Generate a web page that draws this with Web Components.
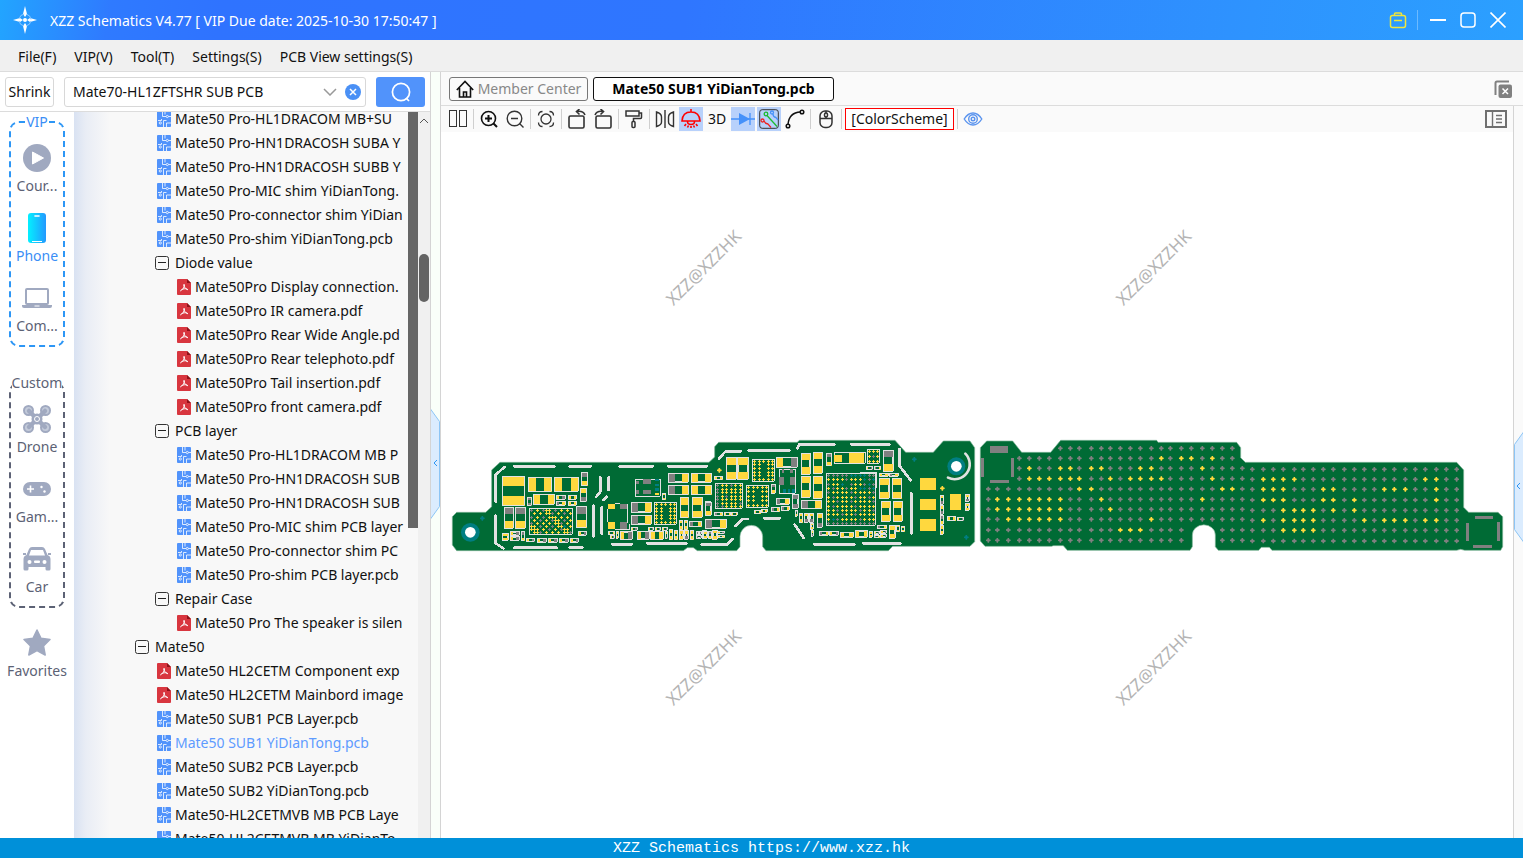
<!DOCTYPE html>
<html lang="en">
<head>
<meta charset="utf-8">
<title>XZZ Schematics V4.77</title>
<style>
html, body { margin: 0; height: 100%; }
body { font: 14px/20px "Noto Sans", "Open Sans", sans-serif; color: #111; overflow: hidden; }
</style>
</head>
<body>
<xzz-app></xzz-app>
<script>
const ICONS = {
  logo: ['0 0 24 30', '<g fill="#fff"><path d="M12 1l2 8-2 3-2-3zM12 29l2-8-2-3-2 3zM0 15l7-2 3 2-3 2zM24 15l-7-2-3 2 3 2z"/><circle cx="12" cy="15" r="2"/></g><g fill="none" stroke="#8fcaff"><circle cx="12" cy="15" r="6" stroke-dasharray="7 2.4" stroke-dashoffset="-1"/></g>'],
  bag: ['0 0 18 18', '<g fill="none" stroke="#f0e63c" stroke-width="1.5"><rect x="1.500" y="4.500" width="15" height="12" rx="2"/><path d="M5.500 4.500v-1.500a1 1 0 0 1 1-1h5a1 1 0 0 1 1 1v1.500M5 9.500h8"/></g>'],
  min: ['0 0 16 16', '<path d="M0 8h16" stroke="#fff" stroke-width="2"/>'],
  max: ['0 0 16 16', '<rect x="1" y="1" width="14" height="14" rx="3" fill="none" stroke="#fff" stroke-width="1.500"/>'],
  close: ['0 0 16 16', '<path d="M.500.500l15 15M15.500.500l-15 15" stroke="#fff" stroke-width="1.600"/>'],
  chevron: ['0 0 14 8', '<path d="M1 1l6 6 6-6" fill="none" stroke="#999" stroke-width="1.500"/>'],
  clear: ['0 0 16 16', '<circle cx="8" cy="8" r="8" fill="#4a90f5"/><path d="M5 5l6 6M11 5l-6 6" stroke="#fff" stroke-width="1.500"/>'],
  search: ['0 0 20 20', '<g fill="none" stroke="#fff" stroke-width="1.700"><circle cx="10" cy="10" r="8.600"/><path d="M15 16l3 3"/></g>'],
  pcb: ['0 0 14 16', '<rect width="14" height="16" rx="1" fill="#5193fb"/><g fill="none" stroke="#fff" stroke-width=".8"><path d="M5.500 0v5.500h3.500M8 0v3.500M1 9.500h3.500v-1.500M14 5.500h-2.500M6.500 16V9.500h3M9.500 16v-4h4.500"/><circle cx="10.300" cy="5.500" r="1.100"/><circle cx="3.300" cy="12" r="1.100"/></g>'],
  pdf: ['0 0 14 16', '<path d="M1 0h9l4 4v11a1 1 0 0 1-1 1H1a1 1 0 0 1-1-1V1a1 1 0 0 1 1-1z" fill="#d8363f"/><path d="M10 0l4 4h-4z" fill="#8e1219"/><path d="M3.200 12c2-.8 4.600-4 4.300-6.200-.3-1-1.300-.4-.8.8.7 2 2.800 4 4.300 4.200M4.500 10.600c1.500-.8 3.800-1.100 5.700-.6" fill="none" stroke="#fff"/>'],
  minus: ['0 0 14 14', '<rect x=".500" y=".500" width="13" height="13" rx="2" fill="#f8f8f8" stroke="#333"/><path d="M3 6.500h8" stroke="#222"/>'],
  play: ['0 0 28 28', '<circle cx="14" cy="14" r="14" fill="#a0a9c0"/><path d="M9.500 8v12l11-6z" fill="#fff" stroke="#fff" stroke-linejoin="round"/>'],
  phone: ['0 0 28 30', '<defs><linearGradient id="p"><stop stop-color="#04f0ff"/><stop offset="1" stop-color="#2399ff"/></linearGradient></defs><rect x="5" width="18" height="30" rx="3" fill="url(#p)"/><path d="M12 3h4" stroke="#fff" stroke-width="1.600" stroke-linecap="round"/><path d="M9 28.500h10" stroke="#fff"/>'],
  laptop: ['0 0 30 20', '<rect x="4" y="1" width="22" height="15" rx="1" fill="none" stroke="#a0a9c0" stroke-width="2"/><path d="M0 17h30v1q0 2-2 2H2q-2 0-2-2z" fill="#a0a9c0"/><path d="M12.500 18h5" stroke="#fff"/>'],
  drone: ['0 0 28 28', '<g fill="#c4cbda" stroke="#a0a9c0" stroke-width="2"><circle cx="5.500" cy="5.500" r="4.500"/><circle cx="22.500" cy="5.500" r="4.500"/><circle cx="5.500" cy="22.500" r="4.500"/><circle cx="22.500" cy="22.500" r="4.500"/></g><path d="M6 6l16 16M22 6L6 22" stroke="#a0a9c0" stroke-width="4.500" stroke-linecap="round"/><circle cx="14" cy="14" r="5.500" fill="#a0a9c0"/><circle cx="14" cy="14" r="2.500" fill="#a0a9c0" stroke="#fff"/>'],
  game: ['0 0 28 14', '<rect width="28" height="14" rx="7" fill="#a0a9c0"/><path d="M7.500 3.500v7M4 7h7" stroke="#fff" stroke-width="1.600"/><circle cx="18.500" cy="5" r="1.200" fill="#fff"/><circle cx="21.500" cy="9.500" r="1.200" fill="#fff"/>'],
  car: ['0 0 28 24', '<path d="M6 2q1-2 3-2h10q2 0 3 2l2.500 6q3 1 3 4v10q0 1.500-1.500 1.500h-2q-1.500 0-1.500-1.500v-2H5.500v2q0 1.500-1.500 1.500H2q-1.500 0-1.500-1.500V12q0-3 3-4zM8 3L6 8.500h16L20 3z" fill="#a0a9c0"/><path d="M0 7h3M25 7h3" stroke="#a0a9c0" stroke-width="2"/><g fill="#fff"><circle cx="6.500" cy="15" r="2"/><circle cx="21.500" cy="15" r="2"/><rect x="11" y="13.500" width="6" height="2.500" rx="1"/></g>'],
  star: ['0 0 28 28', '<path d="M14 1l4 8.300 9 1.200-6.500 6.400 1.700 9.100-8.200-4.400L5.800 26l1.700-9.100L1 10.500l9-1.200z" fill="#a0a9c0" stroke="#a0a9c0" stroke-width="1.500" stroke-linejoin="round"/>'],
  home: ['0 0 18 18', '<g fill="none" stroke="#111" stroke-width="1.600"><path d="M.800 10L9 1.500l8.200 8.500M3.500 8v9h11V8M7.500 17v-5h3v5"/></g>'],
  closeAll: ['0 0 18 18', '<path d="M1.500 15V3q0-1.500 1.500-1.500h12" fill="none" stroke="#808080" stroke-width="2"/><rect x="4.500" y="4.500" width="13.500" height="13.500" rx="2" fill="#808080"/><path d="M8.500 8.500l5.500 5.500M14 8.500L8.500 14" stroke="#fff" stroke-width="1.500"/>'],
  panel: ['0 0 22 18', '<g fill="none" stroke="#707070"><rect x="1" y="1" width="20" height="16" stroke-width="2"/><path d="M7.500 1v16M11 5.500h6M11 9h6M11 12.500h6" stroke-width="1.400"/></g>'],
  split: ['0 0 20 18', '<g fill="none" stroke="#333"><rect x="1.500" y=".500" width="7" height="16"/><rect x="11.500" y=".500" width="7" height="16"/></g>'],
  zoomIn: ['0 0 20 20', '<g fill="none" stroke="#111" stroke-width="1.600"><circle cx="9.500" cy="9.500" r="7"/><path d="M14.500 14.500l3.500 3.500M6 9.500h7M9.500 6v7" stroke-width="2"/></g>'],
  zoomOut: ['0 0 20 20', '<g fill="none" stroke="#333" stroke-width="1.400"><circle cx="9.500" cy="9.500" r="7.300"/><path d="M14.500 14.500l4 4M6 9.500h7"/></g>'],
  fit: ['0 0 18 18', '<g fill="none" stroke="#333" stroke-width="1.300"><circle cx="9" cy="9" r="5"/><path d="M1.500 5.500q0-4 4-4M12.500 1.500q4 0 4 4M16.500 12.500q0 4-4 4M5.500 16.500q-4 0-4-4"/></g>'],
  rotL: ['0 0 20 20', '<g fill="none" stroke="#333" stroke-width="1.600"><rect x="2" y="7" width="15" height="12" rx="1.500"/><path d="M10 2.500q6-1 8 3.500M12.500 0L9.500 2.500l3 3"/></g>'],
  rotR: ['0 0 20 20', '<g fill="none" stroke="#333" stroke-width="1.600"><rect x="3" y="7" width="15" height="12" rx="1.500"/><path d="M2 6q2-4.500 8-3.500M7.500 0l3 2.500-3 3"/></g>'],
  roller: ['0 0 20 20', '<g fill="none" stroke="#333" stroke-width="1.500"><rect x="2" y="2" width="13" height="5"/><path d="M15 4h2.500v4.500q0 1-1 1H9.500v3"/><rect x="8" y="12.500" width="3" height="6" rx="1"/></g>'],
  mirror: ['0 0 20 20', '<g fill="none" stroke="#333" stroke-width="1.400"><path d="M1.500 3q5 1.500 5 5v5q0 3-5 4.500zM18.500 3q-5 1.500-5 5v5q0 3 5 4.500zM10 1v18"/></g>'],
  lamp: ['0 0 20 20', '<g fill="none" stroke="#f00" stroke-width="1.600"><path d="M10 0v3M1 12q.5-9 9-9t9 9zM6.500 12.500q0 3 3.500 3t3.500-3M10 17v2M5 15l-1.500 2M15 15l1.500 2M7.500 16.500l-1 2M12.500 16.500l1 2"/></g>'],
  diode: ['0 0 24 20', '<path d="M0 10h24M19 4v12" stroke="#4591fa" stroke-width="1.300"/><path d="M8 4l11 6-11 6z" fill="#4591fa"/>'],
  net: ['0 0 20 20', '<rect x=".700" y=".700" width="18.600" height="18.600" rx="2.500" fill="none" stroke="#333"/><g fill="none" stroke-width="1.300"><g stroke="#1cbb2e"><circle cx="7" cy="5" r="1.800"/><path d="M8 6.500L18 17.500"/></g><g stroke="#e22"><circle cx="3.500" cy="11.500" r="1.500"/><path d="M5 12q1 2.500 4 3l3 3.500"/></g><g stroke="#4591fa"><circle cx="13" cy="3.500" r="1.500"/><path d="M14 5q0 3 3 3.500l2 2.500"/></g></g>'],
  curve: ['0 0 20 20', '<g fill="none" stroke="#111" stroke-width="1.500"><path d="M3 15.500q1-12 12.500-12.500"/><circle cx="3" cy="17" r="1.800"/><circle cx="17" cy="3" r="1.800"/></g>'],
  mouse: ['0 0 20 20', '<g fill="none" stroke="#333" stroke-width="1.500"><rect x="4" y="2" width="12" height="16.500" rx="5"/><path d="M4 9.500h12M10 2v2M10 7.500v2"/><rect x="8.500" y="4" width="3" height="4" rx="1.500"/></g>'],
  eye: ['0 0 20 20', '<g fill="none" stroke="#5b94ee" stroke-width="1.400"><path d="M1.200 10Q5 4 10 4t8.800 6Q15 16 10 16T1.200 10z"/><circle cx="10" cy="10" r="4.300"/><circle cx="10" cy="10" r="1.800"/></g>'],
  up: ['0 0 10 6', '<path d="M1 5l4-4 4 4" fill="none" stroke="#555"/>']
};

function define(name, markup, setup) {
  customElements.define(name, class extends HTMLElement {
    constructor() { super(); this.attachShadow({ mode: 'open' }); }
    connectedCallback() {
      if (this.shadowRoot.childNodes.length) return;
      const t = document.createElement('template');
      t.innerHTML = typeof markup === 'function' ? markup(this) : markup;
      this.shadowRoot.append(t.content.cloneNode(true));
      if (setup) setup(this);
    }
  });
}

define('ui-icon', el => {
  const [box, body] = ICONS[el.getAttribute('name')];
  const [, , w, h] = box.split(' ');
  return `<style>:host{display:block;flex:none}svg{display:block}</style><svg width="${w}" height="${h}" viewBox="${box}" aria-hidden="true">${body}</svg>`;
});

define('title-bar', `
<style>
:host{display:flex;align-items:center;height:40px;padding:0 16px 0 13px;color:#fff;background:linear-gradient(100deg,#22a5ff 0,#2f7aff 110px,#2f73ff 220px,#2f76ff 45%,#2e93fe 82%,#2ba0ff 100%)}
h1{flex:1;margin:0 0 0 13px;padding-top:2px;font-size:14px;font-weight:400}
button{display:flex;align-items:center;justify-content:center;width:30px;height:30px;padding:0;border:0;background:none}
i{width:1px;height:20px;background:#6cbaff;margin:0 5px 0 4px}
.w{display:flex;align-items:center;margin-right:-6px}
</style>
<ui-icon name="logo"></ui-icon>
<h1>XZZ Schematics V4.77 [ VIP Due date: 2025-10-30 17:50:47 ]</h1>
<div class="w"><button aria-label="Account"><ui-icon name="bag"></ui-icon></button><i></i>
<button aria-label="Minimize"><ui-icon name="min"></ui-icon></button>
<button aria-label="Maximize"><ui-icon name="max"></ui-icon></button>
<button aria-label="Close"><ui-icon name="close"></ui-icon></button></div>`);

define('menu-bar', `
<style>
:host{display:flex;gap:18px;align-items:center;height:31px;padding:0 18px;background:#f0f0f0;border-bottom:1px solid #dcdcdc}
::slotted(button){border:0;padding:2px 0 0;background:none;color:#111;font:14px/20px "Noto Sans",sans-serif}
</style><slot></slot>`);

define('search-bar', `
<style>
:host{display:flex;align-items:center;height:39px;padding:0 5px;background:#fff;border-bottom:1px solid #dcdcdc}
button{padding:0;background:none;border:0;color:#111;font:14px/20px "Noto Sans",sans-serif;display:flex;align-items:center;justify-content:center}
.shrink{box-sizing:border-box;width:49px;height:30px;border:1px solid #d8d8d8;border-radius:3px;margin-right:10px}
.box{flex:1;display:flex;align-items:center;gap:8px;height:28px;min-width:0;border:1px solid #d8d8d8;border-radius:3px;padding:0 4px 0 8px}
input{flex:1;min-width:0;border:0;outline:0;padding:0;background:none;color:#111;font:14px/20px "Noto Sans",sans-serif}
.go{width:49px;height:30px;margin-left:10px;border-radius:3px;background:#5193fb}
</style>
<button class="shrink">Shrink</button>
<div class="box"><input aria-label="Search files" value="Mate70-HL1ZFTSHR SUB PCB"><button aria-label="History"><ui-icon name="chevron"></ui-icon></button><button aria-label="Clear"><ui-icon name="clear"></ui-icon></button></div>
<button class="go" aria-label="Search"><ui-icon name="search"></ui-icon></button>`);

define('rail-item', el => `
<style>
:host{display:block}
button{display:flex;flex-direction:column;align-items:center;box-sizing:border-box;width:100%;height:70px;padding:5px 0 0;border:0;background:none;color:#5c6275;font:14px/20px "Noto Sans",sans-serif}
:host([active]) button{color:#3a8ef6}
.i{height:36px;display:flex;align-items:center;justify-content:center}
</style><button><span class="i"><ui-icon name="${el.getAttribute('icon')}"></ui-icon></span><slot></slot></button>`);

define('nav-rail', `
<style>
:host{display:block;width:74px;flex:none;background:#fff;overflow:hidden}
fieldset{min-width:0;margin:0 9px 26px;padding:3px 0 0;border:2px dashed #2d96f5;border-radius:10px;color:#3a8ef6}
fieldset.c{border-color:#5c6275;color:#5c6275;margin-bottom:12px}
legend{padding:0;margin:0 auto;height:20px;font-size:14px;line-height:20px}
.b{display:block;height:210px}
</style>
<fieldset><legend>VIP</legend><div class="b"><rail-item icon="play">Cour...</rail-item><rail-item icon="phone" active>Phone</rail-item><rail-item icon="laptop">Com...</rail-item></div></fieldset>
<fieldset class="c"><legend>Custom</legend><div class="b"><rail-item icon="drone">Drone</rail-item><rail-item icon="game">Gam...</rail-item><rail-item icon="car">Car</rail-item></div></fieldset>
<rail-item icon="star">Favorites</rail-item>`);

define('tree-row', el => `
<style>
:host{display:flex;align-items:center;height:24px;white-space:nowrap;gap:4px;padding-left:calc(var(--level,0)*20px + 63px)}
:host([kind=minus]){padding-left:calc(var(--level,0)*20px + 61px);gap:6px}
a{color:inherit;text-decoration:none}
:host([selected]){color:#5e9bff}
</style><ui-icon name="${el.getAttribute('kind')}"></ui-icon><a href="#"><slot></slot></a>`,
el => el.style.setProperty('--level', el.getAttribute('level')));

const FILES = `1 pcb Mate50 Pro-HL1DRACOM MB+SU
1 pcb Mate50 Pro-HN1DRACOSH SUBA Y
1 pcb Mate50 Pro-HN1DRACOSH SUBB Y
1 pcb Mate50 Pro-MIC shim YiDianTong.
1 pcb Mate50 Pro-connector shim YiDian
1 pcb Mate50 Pro-shim YiDianTong.pcb
1 minus Diode value
2 pdf Mate50Pro Display connection.
2 pdf Mate50Pro IR camera.pdf
2 pdf Mate50Pro Rear Wide Angle.pd
2 pdf Mate50Pro Rear telephoto.pdf
2 pdf Mate50Pro Tail insertion.pdf
2 pdf Mate50Pro front camera.pdf
1 minus PCB layer
2 pcb Mate50 Pro-HL1DRACOM MB P
2 pcb Mate50 Pro-HN1DRACOSH SUB
2 pcb Mate50 Pro-HN1DRACOSH SUB
2 pcb Mate50 Pro-MIC shim PCB layer
2 pcb Mate50 Pro-connector shim PC
2 pcb Mate50 Pro-shim PCB layer.pcb
1 minus Repair Case
2 pdf Mate50 Pro The speaker is silen
0 minus Mate50
1 pdf Mate50 HL2CETM Component exp
1 pdf Mate50 HL2CETM Mainbord image
1 pcb Mate50 SUB1 PCB Layer.pcb
1 pcb* Mate50 SUB1 YiDianTong.pcb
1 pcb Mate50 SUB2 PCB Layer.pcb
1 pcb Mate50 SUB2 YiDianTong.pcb
1 pcb Mate50-HL2CETMVB MB PCB Laye
1 pcb Mate50-HL2CETMVB MB YiDianTo`.split('\n').map(l => l.match(/^(\d) (\w+)(\*?) (.*)$/));

define('file-tree', () => `
<style>
:host{display:flex;flex:1;min-width:0;overflow:hidden;font-size:14px;background:linear-gradient(90deg,#d9e2f2 0,#e9edf5 12px,#f8f8f8 36px)}
.rows{flex:1;min-width:0;overflow:hidden}
.in{margin-top:-5px}
.h{width:10px;height:416px;margin-left:2px;background:#666}
.v{width:12px;background:#f0f0f0;display:flex;flex-direction:column;align-items:center}
.v ui-icon{margin:6px 0 0}
.v b{width:10px;height:48px;border-radius:5px;background:#636363;margin-top:130px}
</style>
<div class="rows"><div class="in">${FILES.map(f => `<tree-row level="${f[1]}" kind="${f[2]}"${f[3] ? ' selected' : ''}>${f[4]}</tree-row>`).join('')}</div></div>
<div class="h"></div><div class="v"><ui-icon name="up"></ui-icon><b></b></div>`);

define('side-handle', el => {
  const r = el.hasAttribute('right');
  return `<style>
:host{display:flex;align-items:center;width:9px;flex:none;background:${r ? '#fafafa' : '#f9fff9'};border-left:1px solid #d4d4d4;padding-top:${r ? 30 : 18}px}
:host(:not([right])){border-right:1px solid #d4d4d4}
button{padding:0;border:0;background:none;display:block}svg{display:block}
</style><button aria-label="Toggle panel"><svg width="9" height="110" viewBox="0 0 9 110"><path d="${r ? 'M9.500 0L.500 12.500v85L9.500 110' : 'M-.500 0L8.500 12.500v85L-.500 110'}" fill="#dbecfe" stroke="#8cc5f5"/><path d="M6 51L3 54l3 3" fill="none" stroke="#2d96f5"/></svg></button>`;
});

define('tab-strip', `
<style>
:host{display:flex;align-items:center;gap:5px;height:33px;padding:0 11px 0 8px;background:#fafafa;border-bottom:1px solid #dcdcdc}
button{display:flex;align-items:center;justify-content:center;gap:4px;box-sizing:border-box;height:24px;padding:0 5px;border:1px solid #777;border-radius:3px;background:#fafafa;color:#888;font:14px/20px "Noto Sans",sans-serif}
.on{width:241px;border-color:#111;color:#000;font-weight:700;background:#fff}
.m{width:139px}
.x{margin-left:auto;border:0;padding:0}
</style>
<button class="m"><ui-icon name="home"></ui-icon>Member Center</button>
<button class="on">Mate50 SUB1 YiDianTong.pcb</button>
<button class="x" aria-label="Close all"><ui-icon name="closeAll"></ui-icon></button>`);

const TOOLS = ['split', '|', 'zoomIn', 'zoomOut', '|', 'fit', '|', 'rotL', 'rotR', '|', 'roller', '|', 'mirror', 'lamp*', '3D', 'diode*', 'net*', 'curve', '|', 'mouse', '|', 'scheme', '|', 'eye'];
define('tool-bar', () => `
<style>
:host{display:flex;align-items:center;gap:2px;height:26px;padding:0 5px;background:#fafafa}
button{width:24px;height:24px;display:flex;align-items:center;justify-content:center;flex:none;padding:0;border:0;background:none;color:#111;font:14px/20px "Noto Sans",sans-serif}
.on{background:#b8d1fb}
i{width:1px;height:20px;margin:0 1px;background:#cfcfcf}
.scheme{box-sizing:border-box;width:109px;height:22px;border:1px solid #f00;background:#fff}
.p{margin-left:auto}
</style>${TOOLS.map(t => {
  if (t === '|') return '<i></i>';
  if (t === '3D') return '<button>3D</button>';
  if (t === 'scheme') return '<button class="scheme">[ColorScheme]</button>';
  const n = t.replace('*', '');
  return `<button aria-label="${n}"${n !== t ? ' class="on"' : ''}><ui-icon name="${n}"></ui-icon></button>`;
}).join('')}<button class="p" aria-label="Side panel"><ui-icon name="panel"></ui-icon></button>`);

/* Board art, in thirds of a pixel. Each part: x1 y1 x2 y2, then direction (h/v) and the colours of its two pads. */
const Y = '#ffd83e', G = '#808080', T = '#007e82', W = '#e2e2e2', B = '#006b35';
const COL = { y: Y, g: G, t: T };
const snap = v => Math.round(v / 3) * 3;
const parse = s => s.trim().split(/\s*;\s*/).map(p => p.split(/\s+/).map(v => isNaN(v) ? v : +v));
const rect = (x, y, x2, y2, c) => `<path fill="${c}" d="M${snap(x)} ${snap(y)}H${snap(x2)}V${snap(y2)}H${snap(x)}z"/>`;
const frame = (x, y, x2, y2) => `<path d="M${snap(x) + 1.5} ${snap(y) + 1.5}H${snap(x2) - 1.5}V${snap(y2) - 1.5}H${snap(x) + 1.5}z" fill="none" stroke="${W}" stroke-width="3"/>`;
const part = ([x, y, x2, y2, k]) => {
  const w = x2 - x, h = y2 - y, a = COL[k[1]], b = COL[k[2]];
  const pads = k[0] === 'h'
    ? rect(x, y, x + w * .32, y2, a) + rect(x2 - w * .32, y, x2, y2, b)
    : rect(x, y, x2, y + h * .34, a) + rect(x, y2 - h * .34, x2, y2, b);
  return frame(x, y, x2, y2) + (w > 30 || h > 30
    ? pads.replace(/<path/g, '<path') : pads.replace(/z"/g, 'z"')) + frame(x - 1, y - 1, x2 + 1, y2 + 1);
};
const dot = (x, y, c, r = 7) => `<path shape-rendering="auto" fill="${c}" d="M${x - 2} ${y - r}h4l1 4l4 1v4l-4 1l-1 4h-4l-1-4l-4-1v-4l4-1z"/>`;
const pin = (x, y, c) => `<path fill="${c}" d="M${x} ${y - 3}h3v3h3v3h-3v3h-3v-3h-3v-3h3z"/>`;
const bga = (x, y, x2, y2, nx, ny, color) => {
  let s = frame(x, y, x2, y2);
  for (let i = 0; i < nx; i++) for (let j = 0; j < ny; j++) {
    const c = color(i, j);
    if (c) s += pin(snap(x + 6 + i * (x2 - x - 15) / (nx - 1)), snap(y + 6 + j * (y2 - y - 15) / (ny - 1)), c);
  }
  return s;
};

const PA = parse(`172 124 240 212 vyy;249 126 320 170 hyy;328 126 400 170 hyy;265 178 328 209 hyy;408 112 428 152 vgy;406 160 425 200 vyg;246 186 260 212 vgg;334 181 361 194 hyg;370 181 394 194 hyy;334 199 361 211 hgy;370 199 394 211 hyy;177 217 206 280 vgy;211 217 242 280 vgy;394 214 425 278 vgy;400 289 425 301 hyg;172 294 190 317 vyy;195 290 223 301 hyg;195 305 223 317 hyg;228 290 240 317 vgy;244 310 270 320 hyg;277 310 304 322 hyg;310 310 337 322 hyg;343 310 370 322 hyg;376 310 400 322 hyg;652 175 663 194 vyy;669 114 732 142 hgy;738 114 800 142 hyy;669 151 732 179 hgy;738 151 800 179 hyy;706 188 732 249 vyy;741 188 772 249 vyy;781 200 798 242 vgg;558 202 620 232 hgy;558 240 620 268 hgy;702 255 713 284 vyy;718 255 729 284 vyy;732 259 770 276 hgy;489 288 510 299 hyy;495 301 510 312 hyg;513 290 521 310 vyy;526 290 562 314 hyg;577 288 613 313 hyg;617 288 655 314 hyy;660 290 668 312 vyg;673 283 684 314 vyy;687 286 698 314 vyy;704 286 715 314 vyy;719 286 730 314 vyg;735 286 746 314 vyy;755 290 770 298 hgg;755 301 770 310 hgg;773 285 785 312 vyy;558 277 577 287 hyg;609 277 625 287 hyg;630 277 648 287 hyg;652 277 667 287 hyg`);
const PB = parse(`42 123 68 135 hyy;78 68 110 133 vyy;113 68 145 133 vyy;230 66 294 97 hyg;213 148 227 175 vgy;228 190 268 208 hgy;277 178 295 220 vgg;303 54 331 118 vyy;340 52 368 115 vyy;303 124 331 187 vyy;340 124 368 190 vyy;303 196 366 222 hgy;378 54 396 93 vgy;550 46 580 109 vgy;498 93 518 104 hyg;523 93 543 104 hgy;537 114 565 124 hyy;567 114 595 124 hgy;538 129 568 192 vyy;577 129 606 192 vyy;543 198 571 260 vyy;580 198 607 260 vyy;720 180 731 208 vyg;720 212 731 238 vyg;720 242 731 268 vgy;720 272 731 298 vyy;797 177 808 200 vyg;797 204 808 227 vyy;741 244 767 257 hyy;771 247 791 257 hyg;42 232 68 243 hgy;72 232 92 242 hyy;95 232 112 242 hyy;16 252 80 280 hgy;9 288 22 312 vyy;24 288 35 312 vgy;38 285 52 314 vyy;53 288 74 297 hyg;53 300 74 309 hyy;162 226 182 236 hyy;184 223 202 233 hyy;213 216 240 230 hgy;243 214 268 227 hgy;286 226 294 244 vgy;298 234 309 263 vyy;313 234 325 263 vyg;329 234 342 263 vyg;352 236 368 277 vyg;332 265 342 283 vyy;333 287 342 304 vyg;357 289 386 301 hgy;388 289 416 301 hyg;420 291 460 307 hyy;466 287 504 307 hyy;508 290 518 307 vyy;522 289 540 298 hyg;522 300 540 309 hgy;532 270 560 282 hgy;542 286 560 295 hyg;542 298 560 307 hyg;568 270 586 310 vyy;588 271 600 290 vyy;603 275 615 290 vyy`);

const BOARD_A = () => `
<path fill="${B}" stroke="#7cb495" stroke-width="2" shape-rendering="auto" d="M35 347L22 330V245L35 232H122L140 215V105L165 82H792L809 66V35L821 22H1057L1063 16H1350L1382 52H1465L1495 18H1575L1589 38V320L1575 334H1343L1330 347H963L953 335V305A34 34 0 0 0 885 305V335L875 347H757L745 338H727L715 347z"/>
<g fill="none" stroke="${W}" stroke-width="8" stroke-linecap="round" stroke-linejoin="round">
<path d="M178 96L152 120V200M152 242V325L175 340M208 94H328M374 94H438M524 94H623M670 94H786M466 127V170L454 185M491 127V165M485 185L475 195M446 212V304M470 217V296M208 338H335M374 338H412M501 328H560M606 325H724M770 328H847L863 312"/></g>
<g shape-rendering="auto"><circle cx="76" cy="292" r="28" fill="${T}"/><circle cx="76" cy="292" r="16" fill="#fff"/></g>
${dot(112, 250, T)}
${PA.map(part).join('')}
${frame(571, 132, 648, 186)}
${rect(594, 132, 618, 147, G)}${rect(594, 165, 618, 178, G)}${rect(572, 137, 582, 147, G)}${rect(572, 165, 582, 178, G)}${rect(630, 132, 642, 139, T)}${rect(630, 146, 642, 153, T)}${rect(630, 160, 642, 167, T)}${rect(630, 174, 642, 180, Y)}
<path d="M510 207H525M489 223V262M510 285H553V268M549 207V265" fill="none" stroke="${W}" stroke-width="3"/>
${rect(489, 208, 510, 223, Y)}${rect(489, 262, 510, 282, Y)}${rect(525, 208, 546, 222, G)}${rect(525, 262, 546, 282, G)}
${bga(252, 220, 384, 300, 14, 8, (i, j) => (i + j) % 2 ? null : (i * 7 + j * 5) % 9 < 3 ? G : (i * 5 + j * 3) % 23 === 1 ? T : Y)}
${bga(252, 220, 384, 300, 14, 8, (i, j) => (i + j) % 2 && (i * 3 + j * 7) % 5 === 0 ? Y : null)}
${bga(627, 202, 696, 270, 5, 6, (i, j) => i === 2 && j > 0 && j < 5 ? null : Y)}`;

const BOARD_B = () => `
<g fill="none" stroke="${W}" stroke-width="8" stroke-linecap="round" stroke-linejoin="round">
<path d="M57 70L77 49H122M146 46H268M292 40L298 28H403M453 28H568M599 42V93L632 136M634 174V295M106 273L128 252H143M192 250H240M284 269L311 309M342 328H463M489 325H601"/>
<path d="M796 56A45 45 0 0 1 744 128" shape-rendering="auto"/></g>
<g shape-rendering="auto"><circle cx="769" cy="94" r="27" fill="${T}"/><circle cx="769" cy="94" r="16" fill="#fff"/></g>
${dot(643, 73, T)}${dot(799, 307, T)}${dot(58, 106, Y)}${dot(727, 160, Y)}
${PB.map(part).join('')}
${rect(660, 129, 708, 165, Y)}${rect(660, 192, 708, 225, Y)}${rect(660, 252, 708, 288, Y)}${rect(750, 177, 783, 225, Y)}
${frame(401, 51, 497, 87)}${rect(403, 60, 425, 82, Y)}${rect(447, 54, 491, 83, Y)}
${frame(236, 102, 288, 176)}
${rect(246, 103, 253, 113, G)}${rect(271, 103, 278, 113, G)}${rect(237, 126, 252, 150, G)}${rect(271, 126, 285, 150, G)}${rect(250, 162, 257, 175, T)}${rect(263, 162, 270, 175, T)}${rect(277, 162, 284, 175, T)}
${frame(15, 200, 35, 243)}${rect(18, 203, 33, 214, G)}${rect(18, 228, 33, 241, Y)}
${bga(156, 71, 225, 141, 5, 6, (i, j) => i === 2 && j > 0 && j < 5 ? null : Y)}
${bga(45, 145, 129, 223, 6, 7, (i, j) => i === 0 || (i * 3 + j) % 11 === 9 ? G : Y)}
${bga(138, 150, 207, 218, 5, 5, (i, j) => i === 2 && j > 0 && j < 4 ? null : Y)}
${bga(501, 43, 541, 87, 3, 3, (i, j) => i === 1 && j === 1 ? G : Y)}
${bga(379, 113, 529, 274, 11, 12, (i, j) => j === 0 ? (i > 4 && i < 9 ? T : G) : i > 7 && j < 4 ? ((i + j) % 2 ? T : G) : j === 11 || (i * 5 + j * 7) % 13 < 3 ? G : (i === 4 && j < 3) ? null : (i * 3 + j * 5) % 17 === 2 ? T : Y)}
<path d="M480 114H528V158" fill="none" stroke="${W}" stroke-width="5"/>`;

const CX = [55, 82, 115, 148, 178, 208, 238, 271, 301, 328, 364, 394, 421, 451, 481, 511, 544, 574, 601, 634, 664, 697, 727, 757, 787, 817];
const CY = [40, 70, 100, 131, 162, 193, 223, 253, 285, 316];
const CGOLD = [[], [574, 634, 664, 727], [178, 271, 301, 364, 394, 511, 544, 697], [178, 208, 238, 271, 301, 328, 421, 481, 511, 544, 574, 727], [328, 364, 757, 787], [82, 115, 148, 178, 208, 238, 271, 394, 697], [82, 115, 148, 178, 208, 238, 271, 421], [115, 148, 178, 208, 238, 271, 544], [451, 481, 511], []];
const DX = [67, 100, 130, 160, 193, 220, 250, 280, 310, 343, 373, 403, 433, 463, 493, 526, 556, 586, 619, 649, 680];
const DY = [148, 178, 208, 240, 271, 301, 331, 363];
const DGOLD = [[], [100, 130, 160, 193, 586, 619], [100, 130, 160, 280, 310, 463, 493, 526, 619], [100, 130, 160, 280, 310, 373, 619], [160, 193, 220, 250, 310, 373], [100, 160, 193, 220, 250, 403, 463, 493, 526, 586, 619], [160, 193, 220, 250], []];
const BOARD_C = () => {
  let s = `<path fill="${B}" stroke="#7cb495" stroke-width="2" shape-rendering="auto" d="M50 18H128L155 52H242L272 16H560L564 22H800L812 38V68L826 82H1460L1481 105V217L1496 232H1584L1598 245V335L1592 346H1484L1472 343L1460 346H906L898 337H874L866 346H745L736 335V300A34 30 0 0 0 667 300V335L660 346H292L280 332H250L245 334H45L31 318V38z"/>`;
  CY.forEach((y, j) => CX.forEach(x => {
    if (j === 0 && (x < 271 || x > 787) || j === 1 && (x < 148 || x > 787) || j < 4 && x < 148 || j > 7 && x > 650 && x < 750) return;
    s += dot(x, y, CGOLD[j].includes(x) ? Y : G);
  }));
  DY.forEach((y, j) => DX.forEach(x => s += dot(x + 780, y - 45, DGOLD[j].includes(x) ? Y : G)));
  return s + rect(60, 33, 114, 53, G) + rect(33, 69, 42, 126, G) + rect(123, 69, 132, 126, G) + rect(60, 135, 117, 144, G)
    + rect(1515, 243, 1569, 252, G) + rect(1488, 264, 1497, 318, G) + rect(1581, 261, 1590, 318, G) + rect(1509, 330, 1566, 339, G);
};

define('board-canvas', () => `
<style>
:host{display:block;flex:1;min-width:0;min-height:0;background:#fff}
svg{display:block;width:100%;height:100%}
text{font:17px "Noto Sans",sans-serif;fill:#b4b4b4;text-anchor:middle}
</style>
<svg viewBox="441 132 1072 706" role="img" aria-label="Mate50 SUB1 board view">
<g shape-rendering="crispEdges">
<g transform="translate(445 435) scale(.33333)">${BOARD_A()}</g>
<g transform="translate(700 435) scale(.33333)">${BOARD_B()}</g>
<g transform="translate(970 435) scale(.33333)">${BOARD_C()}</g></g>
${[[703, 267], [1153, 267], [703, 667], [1153, 667]].map(([x, y]) => `<text transform="translate(${x} ${y}) rotate(-45)" y="7">XZZ@XZZHK</text>`).join('')}
</svg>`);

define('status-bar', `
<style>:host{display:block;box-sizing:border-box;height:20px;padding-top:1px;background:#0090d9;color:#fff;text-align:center;font:15px/20px "Liberation Mono",monospace}</style><slot></slot>`);

define('xzz-app', `
<style>
:host{display:flex;flex-direction:column;height:100vh;background:#fff}
.body,.row{display:flex;flex:1;min-height:0}
.left{display:flex;flex-direction:column;width:430px;flex:none}
.main,.view{display:flex;flex-direction:column;flex:1;min-width:0}
</style>
<title-bar></title-bar>
<menu-bar><button>File(F)</button><button>VIP(V)</button><button>Tool(T)</button><button>Settings(S)</button><button>PCB View settings(S)</button></menu-bar>
<div class="body">
<div class="left"><search-bar></search-bar><div class="row"><nav-rail></nav-rail><file-tree></file-tree></div></div>
<side-handle></side-handle>
<div class="main"><tab-strip></tab-strip>
<div class="row"><div class="view"><tool-bar></tool-bar><board-canvas></board-canvas></div><side-handle right></side-handle></div></div>
</div>
<status-bar>XZZ Schematics https://www.xzz.hk</status-bar>`);
</script>
</body>
</html>
